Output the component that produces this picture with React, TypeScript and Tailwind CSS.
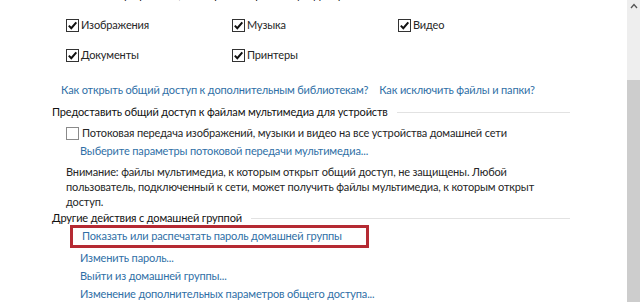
import React from "react";

const font = { fontFamily: 'Lato, "Noto Sans", sans-serif' };

function Box({ checked }: { checked?: boolean }) {
  return (
    <span
      className={`inline-flex h-[13px] w-[13px] shrink-0 items-center justify-center border bg-white ${
        checked ? "border-[#333]" : "border-[#8a8a8a]"
      }`}
    >
      {checked && (
        <svg width="11" height="11" viewBox="0 0 11 11">
          <path d="M1.8 5.6 L4.3 8.2 L9.3 2.4" fill="none" stroke="#111" strokeWidth="2" />
        </svg>
      )}
    </span>
  );
}

function Check({ label }: { label: string }) {
  return (
    <div className="flex items-center gap-[2px]">
      <Box checked />
      <span>{label}</span>
    </div>
  );
}

function Header({ text, className = "" }: { text: string; className?: string }) {
  return (
    <div className={`flex items-center text-[#111] ${className}`}>
      <span className="whitespace-nowrap">{text}</span>
      <div className="ml-[9px] h-px flex-1 bg-[#e2e2e2]" />
    </div>
  );
}

const link = "text-[#2f6fa6] whitespace-nowrap";

export default function App() {
  return (
    <div
      className="flex h-[302px] w-[640px] overflow-hidden bg-white text-[11px] tracking-[-0.15px] text-[#262626]"
      style={font}
    >
      <div className="w-[570px] shrink-0 pl-[52px]">
        <div className="-mt-[13px] h-[15px] whitespace-nowrap leading-[15px] text-[#111]">
          Библиотеки и устройства, к которым открыт общий доступ
        </div>

        <div className="mt-[13px] grid h-[20px] grid-cols-[166px_166px_166px] items-center pl-[14px]">
          <Check label="Изображения" />
          <Check label="Музыка" />
          <Check label="Видео" />
        </div>
        <div className="mt-[10px] grid h-[20px] grid-cols-[166px_166px_166px] items-center pl-[14px]">
          <Check label="Документы" />
          <Check label="Принтеры" />
        </div>

        <div className="mt-[15px] flex h-[20px] items-center gap-[11px] pl-[9px]">
          <span className={link}>Как открыть общий доступ к дополнительным библиотекам?</span>
          <span className={link}>Как исключить файлы и папки?</span>
        </div>

        <Header text="Предоставить общий доступ к файлам мультимедиа для устройств" className="mt-[4px] h-[17px]" />

        <div className="mt-[3px] flex h-[19px] items-center gap-[3px] pl-[14px]">
          <Box />
          <span className="whitespace-nowrap">
            Потоковая передача изображений, музыки и видео на все устройства домашней сети
          </span>
        </div>
        <div className="flex h-[16px] items-center pl-[28px]">
          <span className={link}>Выберите параметры потоковой передачи мультимедиа...</span>
        </div>

        <p className="mt-[5px] whitespace-nowrap pl-[14px] leading-[15px]">
          Внимание: файлы мультимедиа, к которым открыт общий доступ, не защищены. Любой
          <br />
          пользователь, подключенный к сети, может получить файлы мультимедиа, к которым открыт
          <br />
          доступ.
        </p>

        <Header text="Другие действия с домашней группой" className="mt-[3px] h-[13px]" />

        <div className="ml-[18px] flex h-[23px] w-[299px] items-center border-[3px] border-[#b52a33] pl-[9px]">
          <span className={link}>Показать или распечатать пароль домашней группы</span>
        </div>

        <div className="mt-[1px] flex h-[18px] items-center pl-[28px]">
          <span className={link}>Изменить пароль...</span>
        </div>
        <div className="flex h-[18px] items-center pl-[28px]">
          <span className={link}>Выйти из домашней группы...</span>
        </div>
        <div className="flex h-[18px] items-center pl-[28px]">
          <span className={link}>Изменение дополнительных параметров общего доступа...</span>
        </div>
      </div>

      <div className="flex-1" />

      <div className="flex w-[13px] shrink-0 flex-col bg-[#eeeeee]">
        <div className="flex h-[12px] items-center justify-center">
          <svg width="8" height="6" viewBox="0 0 8 6">
            <path d="M1 5 L4 1.5 L7 5" fill="none" stroke="#555" strokeWidth="1.3" />
          </svg>
        </div>
        <div className="mt-[68px] flex-1 bg-[#cdcdcd]" />
      </div>
    </div>
  );
}
